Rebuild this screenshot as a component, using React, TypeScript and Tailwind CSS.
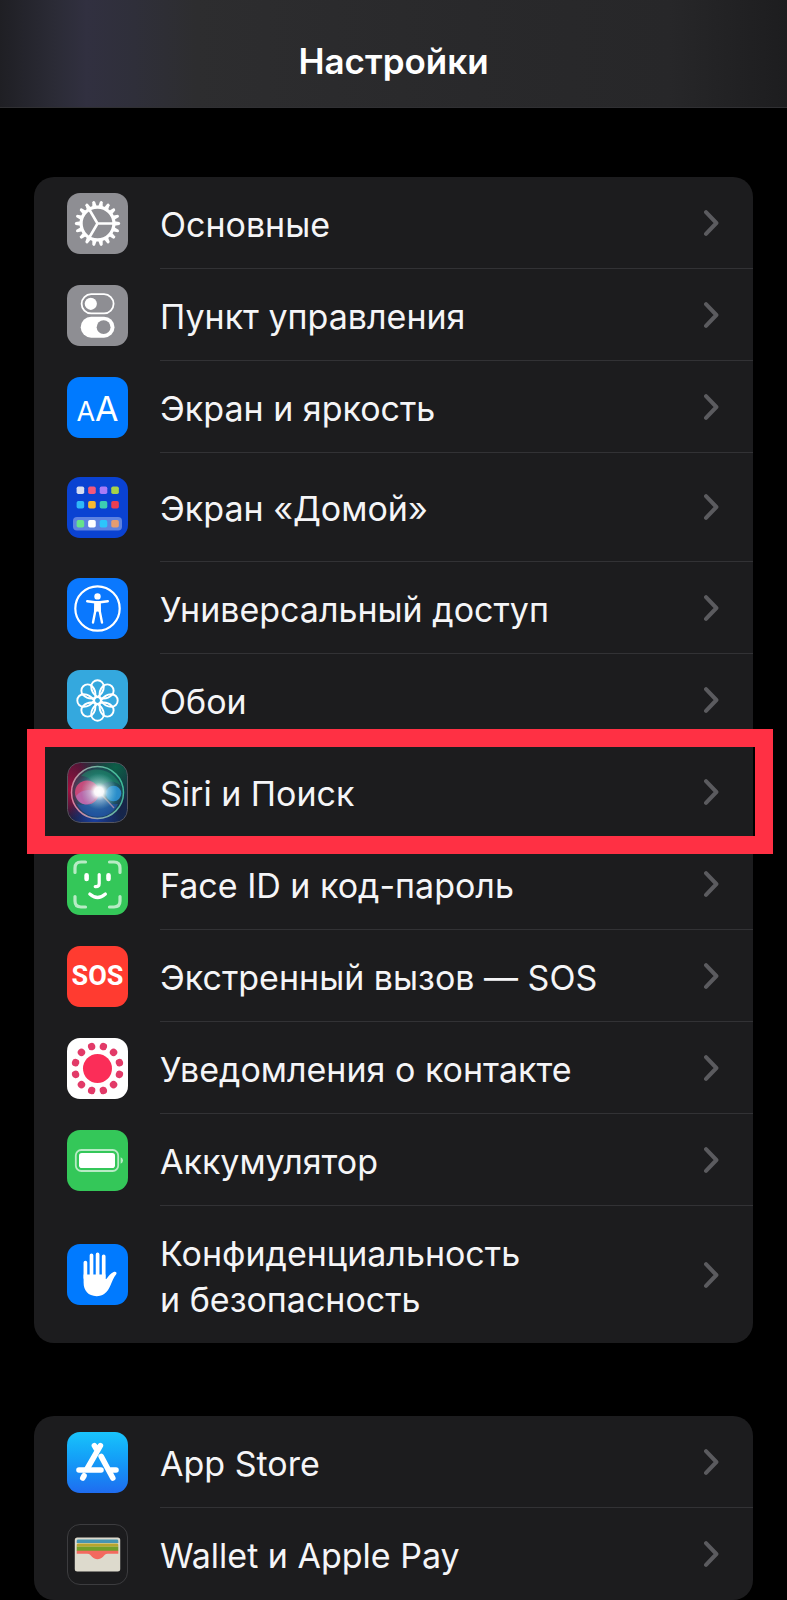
import type { ReactNode } from 'react';

const degrees = (count: number, offset = 0) =>
  Array.from({ length: count }, (_, i) => offset + (i * 360) / count);

function Glyph({ children }: { children: ReactNode }) {
  return (
    <svg viewBox="0 0 61 61" className="size-full" fill="none" aria-hidden="true">
      {children}
    </svg>
  );
}

function GearIcon() {
  return (
    <Glyph>
      <circle cx="30.5" cy="30.5" r="16.4" stroke="#fff" strokeWidth="3.2" />
      {degrees(18, 10).map((deg) => (
        <path
          key={deg}
          d="M28.2 13.8L29.1 8.6Q30.5 6.8 31.9 8.6L32.8 13.8Z"
          fill="#fff"
          transform={`rotate(${deg} 30.5 30.5)`}
        />
      ))}
      <path d="M30.5 30.5H46M30.5 30.5L22.6 17M30.5 30.5L22.6 44" stroke="#fff" strokeWidth="2.6" />
    </Glyph>
  );
}

function TogglesIcon() {
  return (
    <Glyph>
      <rect x="14.6" y="9.2" width="32" height="19.2" rx="9.6" stroke="#fff" strokeWidth="1.8" />
      <circle cx="23.8" cy="18.8" r="6.1" fill="#fff" />
      <rect x="13.7" y="31.7" width="33.8" height="21" rx="10.5" fill="#fff" />
      <circle cx="36.6" cy="42.2" r="6.9" fill="#8e8e93" />
    </Glyph>
  );
}

const homeApps = [
  { y: 13.3, colors: ['#d6dcf2', '#f2587c', '#a97bf7', '#a6d24a'] },
  { y: 27.8, colors: ['#2fb8f8', '#f8b930', '#3bcfb2', '#ea3f52'] },
  { y: 46.8, colors: ['#66e38b', '#ffffff', '#2cc4fb', '#e69d70'] },
];

function HomeScreenIcon() {
  return (
    <Glyph>
      <rect x="6" y="40" width="49" height="13.6" rx="4" fill="#fff" fillOpacity="0.34" />
      {homeApps.map((row) =>
        row.colors.map((color, i) => (
          <rect key={color} x={9.6 + i * 11.55} y={row.y - 3.8} width="7.6" height="7.6" rx="1.8" fill={color} />
        ))
      )}
    </Glyph>
  );
}

function AccessibilityIcon() {
  return (
    <Glyph>
      <circle cx="30.5" cy="30.5" r="22.2" stroke="#fff" strokeWidth="2.2" />
      <circle cx="30.5" cy="18.4" r="3.2" fill="#fff" />
      <path
        d="M20.2 23.2L28 24.3H33L40.8 23.2M28.6 25L28.3 33L26 44.6M32.4 25L32.7 33L35 44.6"
        stroke="#fff"
        strokeWidth="2.4"
        strokeLinecap="round"
        strokeLinejoin="round"
      />
      <path d="M27.4 24H33.6L33.9 34L30.5 33.4L27.1 34Z" fill="#fff" />
    </Glyph>
  );
}

function FlowerIcon() {
  return (
    <Glyph>
      <g stroke="#fff" strokeWidth="1.9">
        {degrees(8).map((deg) => (
          <path
            key={deg}
            d="M30.5 27C26.5 24.5 24.2 20 24.2 16.6A6.3 6.3 0 0 1 36.8 16.6C36.8 20 34.5 24.5 30.5 27Z"
            transform={`rotate(${deg} 30.5 30.5)`}
          />
        ))}
        <circle cx="30.5" cy="30.5" r="3.4" />
      </g>
    </Glyph>
  );
}

function SiriIcon() {
  return (
    <Glyph>
      <defs>
        <linearGradient id="siri-base" x1="0" y1="0" x2="1" y2="1">
          <stop offset="0" stopColor="#5c1436" />
          <stop offset="0.45" stopColor="#1d1c38" />
          <stop offset="1" stopColor="#14284f" />
        </linearGradient>
        <radialGradient id="siri-green" cx="0.8" cy="0.08" r="0.6">
          <stop offset="0" stopColor="#0c6048" />
          <stop offset="1" stopColor="#0c6048" stopOpacity="0" />
        </radialGradient>
        <radialGradient id="siri-red" cx="0.02" cy="0.45" r="0.5">
          <stop offset="0" stopColor="#a3103f" />
          <stop offset="1" stopColor="#a3103f" stopOpacity="0" />
        </radialGradient>
        <radialGradient id="siri-blue" cx="0.45" cy="0.95" r="0.45">
          <stop offset="0" stopColor="#1a3fa0" />
          <stop offset="1" stopColor="#1a3fa0" stopOpacity="0" />
        </radialGradient>
        <radialGradient id="siri-orb" cx="0.5" cy="0.5" r="0.5">
          <stop offset="0" stopColor="#5a90a8" />
          <stop offset="0.7" stopColor="#27707c" stopOpacity="0.75" />
          <stop offset="1" stopColor="#1a4a58" stopOpacity="0.45" />
        </radialGradient>
        <linearGradient id="siri-ring" x1="0" y1="0.6" x2="1" y2="0.3">
          <stop offset="0" stopColor="#e887a8" />
          <stop offset="0.4" stopColor="#9ab8b0" />
          <stop offset="1" stopColor="#3ec9a0" />
        </linearGradient>
        <radialGradient id="siri-glow">
          <stop offset="0" stopColor="#fff" />
          <stop offset="0.25" stopColor="#fff" stopOpacity="0.95" />
          <stop offset="0.5" stopColor="#e2f6f6" stopOpacity="0.45" />
          <stop offset="1" stopColor="#9fe6e0" stopOpacity="0" />
        </radialGradient>
      </defs>
      <rect x="0.5" y="0.5" width="60" height="60" rx="13" fill="url(#siri-base)" />
      <rect x="0.5" y="0.5" width="60" height="60" rx="13" fill="url(#siri-green)" />
      <rect x="0.5" y="0.5" width="60" height="60" rx="13" fill="url(#siri-red)" />
      <rect x="0.5" y="0.5" width="60" height="60" rx="13" fill="url(#siri-blue)" stroke="#55555f" />
      <circle cx="30.5" cy="30.5" r="26" fill="url(#siri-orb)" stroke="url(#siri-ring)" strokeWidth="1.5" strokeOpacity="0.9" />
      <path d="M14 14C24 3 46 6 54 24C46 17 38 18 31 28C28 20 21 14 14 14Z" fill="#1b8f68" fillOpacity="0.5" />
      <path d="M10 42C18 45 26 39 32 31C38 39 44 43 51 42C44 59 18 59 10 42Z" fill="#2458b8" fillOpacity="0.6" />
      <circle cx="20" cy="30.5" r="12" fill="#e84880" fillOpacity="0.8" />
      <path d="M9 34C14 27 24 26 31 31C28 39 22 43 18 42.4C13 41.6 10 39 9 34Z" fill="#b080d8" fillOpacity="0.5" />
      <circle cx="46.5" cy="31.5" r="7.8" fill="#2d96dc" fillOpacity="0.85" />
      <path d="M35 33L47 46" stroke="#e6aab0" strokeOpacity="0.6" strokeWidth="1.4" />
      <circle cx="32" cy="29.5" r="18" fill="url(#siri-glow)" />
    </Glyph>
  );
}

function FaceIdIcon() {
  return (
    <Glyph>
      <g stroke="#fff" strokeWidth="3.2" strokeLinecap="round">
        <path
          d="M8 18.5V14Q8 8 14 8H18.5M42.5 8H47Q53 8 53 14V18.5M53 42.5V47Q53 53 47 53H42.5M18.5 53H14Q8 53 8 47V42.5"
          strokeOpacity="0.65"
        />
        <path d="M19.6 21.2V25M41.5 21.2V25" strokeWidth="4.6" />
        <path d="M32.2 20.5V29.5Q32.2 32.6 29 32.6H28.2M22.8 40Q30.5 47 38.4 40" />
      </g>
    </Glyph>
  );
}

function ContactIcon() {
  return (
    <Glyph>
      <circle cx="30.5" cy="30.5" r="14.5" fill="#fb2d58" />
      {degrees(12, 15).map((deg) => (
        <circle key={deg} cx="30.5" cy="7.8" r="3.7" fill="#e23a68" transform={`rotate(${deg} 30.5 30.5)`} />
      ))}
    </Glyph>
  );
}

function BatteryIcon() {
  return (
    <Glyph>
      <rect x="8.8" y="20" width="42.4" height="21" rx="5.5" stroke="#fff" strokeOpacity="0.65" strokeWidth="1.8" />
      <rect x="12" y="23" width="36" height="15" rx="2.8" fill="#fff" />
      <path d="M53.6 27.2Q56 28.2 56 30.5T53.6 33.8Z" fill="#fff" fillOpacity="0.65" />
    </Glyph>
  );
}

function HandIcon() {
  return (
    <Glyph>
      <path
        d="M18.4 18.6V34M24.5 11.3V34M30.6 10.4V34M36.7 12.3V34"
        stroke="#fff"
        strokeWidth="3.7"
        strokeLinecap="round"
      />
      <path
        d="M16.6 30.5H38.5V34.2C38.6 35.3 39.4 35.3 40 34.3C41.6 31.8 43.6 29.4 46.6 28C48.6 27.2 50.4 28.4 49.2 30.2C46.6 33.6 45.2 37.4 43.4 41.4C40.4 48.4 36 52.2 29.6 52.2C21.2 52.2 16.6 46.6 16.6 38.6Z"
        fill="#fff"
      />
    </Glyph>
  );
}

function AppStoreIcon() {
  return (
    <Glyph>
      <g stroke="#fff" strokeWidth="5.6" strokeLinecap="round">
        <path d="M27.4 13.6L29.6 17.4M33.4 13.6L20 37" />
        <path d="M34.2 24.4L45.8 46" />
        <path d="M12 38H34M44 38H49M17 43.8L15.8 46" />
      </g>
    </Glyph>
  );
}

function WalletIcon() {
  return (
    <Glyph>
      <rect x="7" y="13" width="47" height="35" rx="2.6" fill="#dddacd" />
      <path d="M9 18.6V16.5Q9 15 10.5 15H50.5Q52 15 52 16.5V18.6Z" fill="#4795b2" />
      <path d="M9 22.6V20.5Q9 19 10.5 19H50.5Q52 19 52 20.5V22.6Z" fill="#b8a52e" />
      <path d="M9 27V22.6H52V27Z" fill="#719f2b" />
      <path
        d="M9 29.6V26.6H52V29.6H41C38.4 29.6 37.6 31.2 36.2 32.8C33.2 36.2 27.8 36.2 24.8 32.8C23.4 31.2 22.6 29.6 20 29.6Z"
        fill="#f3695f"
      />
    </Glyph>
  );
}

type Setting = {
  title: ReactNode;
  icon: ReactNode;
  tile: string;
  row?: string;
  highlighted?: boolean;
};

const systemSettings: Setting[] = [
  { title: 'Основные', icon: <GearIcon />, tile: 'bg-[#8e8e93]' },
  { title: 'Пункт управления', icon: <TogglesIcon />, tile: 'bg-[#8e8e93]' },
  {
    title: 'Экран и яркость',
    icon: (
      <span className="flex items-baseline pt-1 leading-none text-white">
        <span className="text-[27px]">A</span>
        <span className="text-[34px]">A</span>
      </span>
    ),
    tile: 'bg-[#007aff]',
  },
  { title: 'Экран «Домой»', icon: <HomeScreenIcon />, tile: 'bg-[#0a42d2]', row: 'min-h-[109px]' },
  { title: 'Универсальный доступ', icon: <AccessibilityIcon />, tile: 'bg-[#0a78fe]' },
  { title: 'Обои', icon: <FlowerIcon />, tile: 'bg-[#34a8de]' },
  { title: 'Siri и Поиск', icon: <SiriIcon />, tile: '', highlighted: true },
  { title: 'Face ID и код-пароль', icon: <FaceIdIcon />, tile: 'bg-[#34c759]' },
  {
    title: 'Экстренный вызов — SOS',
    icon: <span className="font-['Roboto',sans-serif] text-[27px] leading-none font-bold text-white">SOS</span>,
    tile: 'bg-[#ff3b30]',
  },
  { title: 'Уведомления о контакте', icon: <ContactIcon />, tile: 'bg-white' },
  { title: 'Аккумулятор', icon: <BatteryIcon />, tile: 'bg-[#34c759]' },
  {
    title: (
      <>
        Конфиденциальность
        <br />и безопасность
      </>
    ),
    icon: <HandIcon />,
    tile: 'bg-[#007aff]',
    row: 'min-h-[137px]',
  },
];

const storeSettings: Setting[] = [
  { title: 'App Store', icon: <AppStoreIcon />, tile: 'bg-linear-to-b from-[#1ac4fb] to-[#1f6cf0]' },
  { title: 'Wallet и Apple Pay', icon: <WalletIcon />, tile: 'border border-[#3c3c3f]' },
];

function SettingRow({ setting, last }: { setting: Setting; last: boolean }) {
  return (
    <li className="relative">
      <a href="#" className={`flex items-stretch pl-[33px] ${setting.row ?? 'min-h-[92px]'}`}>
        <span className="flex items-center">
          <span className={`flex size-[61px] items-center justify-center overflow-hidden rounded-[13px] ${setting.tile}`}>
            {setting.icon}
          </span>
        </span>
        <span
          className={`ml-8 flex flex-1 items-center justify-between pr-[34px] ${last ? '' : 'border-b border-[#323235]'}`}
        >
          <span className="pt-1 text-[34px] leading-[46px] text-[#f5f5f7]">{setting.title}</span>
          <svg viewBox="0 0 15 26" className="h-[26px] w-[15px] shrink-0" fill="none" aria-hidden="true">
            <path d="M2 2.2L12.4 13L2 23.8" stroke="#5b5b5f" strokeWidth="4" strokeLinecap="round" strokeLinejoin="round" />
          </svg>
        </span>
      </a>
      {setting.highlighted && (
        <div className="pointer-events-none absolute -top-[17px] -right-5 -bottom-4 -left-[7px] z-10 border-[18px] border-[#ff3044]" />
      )}
    </li>
  );
}

function SettingsGroup({ settings }: { settings: Setting[] }) {
  return (
    <ul className="rounded-[20px] bg-[#1c1c1e]">
      {settings.map((setting, i) => (
        <SettingRow key={i} setting={setting} last={i === settings.length - 1} />
      ))}
    </ul>
  );
}

export default function App() {
  return (
    <div className="min-h-screen bg-black font-['Inter','Liberation_Sans',sans-serif]">
      <header className="flex h-[108px] items-end justify-center border-b border-[#303033] bg-[linear-gradient(90deg,#1f1f24_0%,#2b2b36_7%,#313040_11%,#2f2f3a_17%,#2d2d2f_25%,#29292b_60%,#272729_85%,#1d1d1f_100%)] pb-6">
        <h1 className="text-[35px] leading-[44px] font-semibold text-white">Настройки</h1>
      </header>
      <main className="flex flex-col gap-[73px] px-[34px] pt-[69px]">
        <SettingsGroup settings={systemSettings} />
        <SettingsGroup settings={storeSettings} />
      </main>
    </div>
  );
}
